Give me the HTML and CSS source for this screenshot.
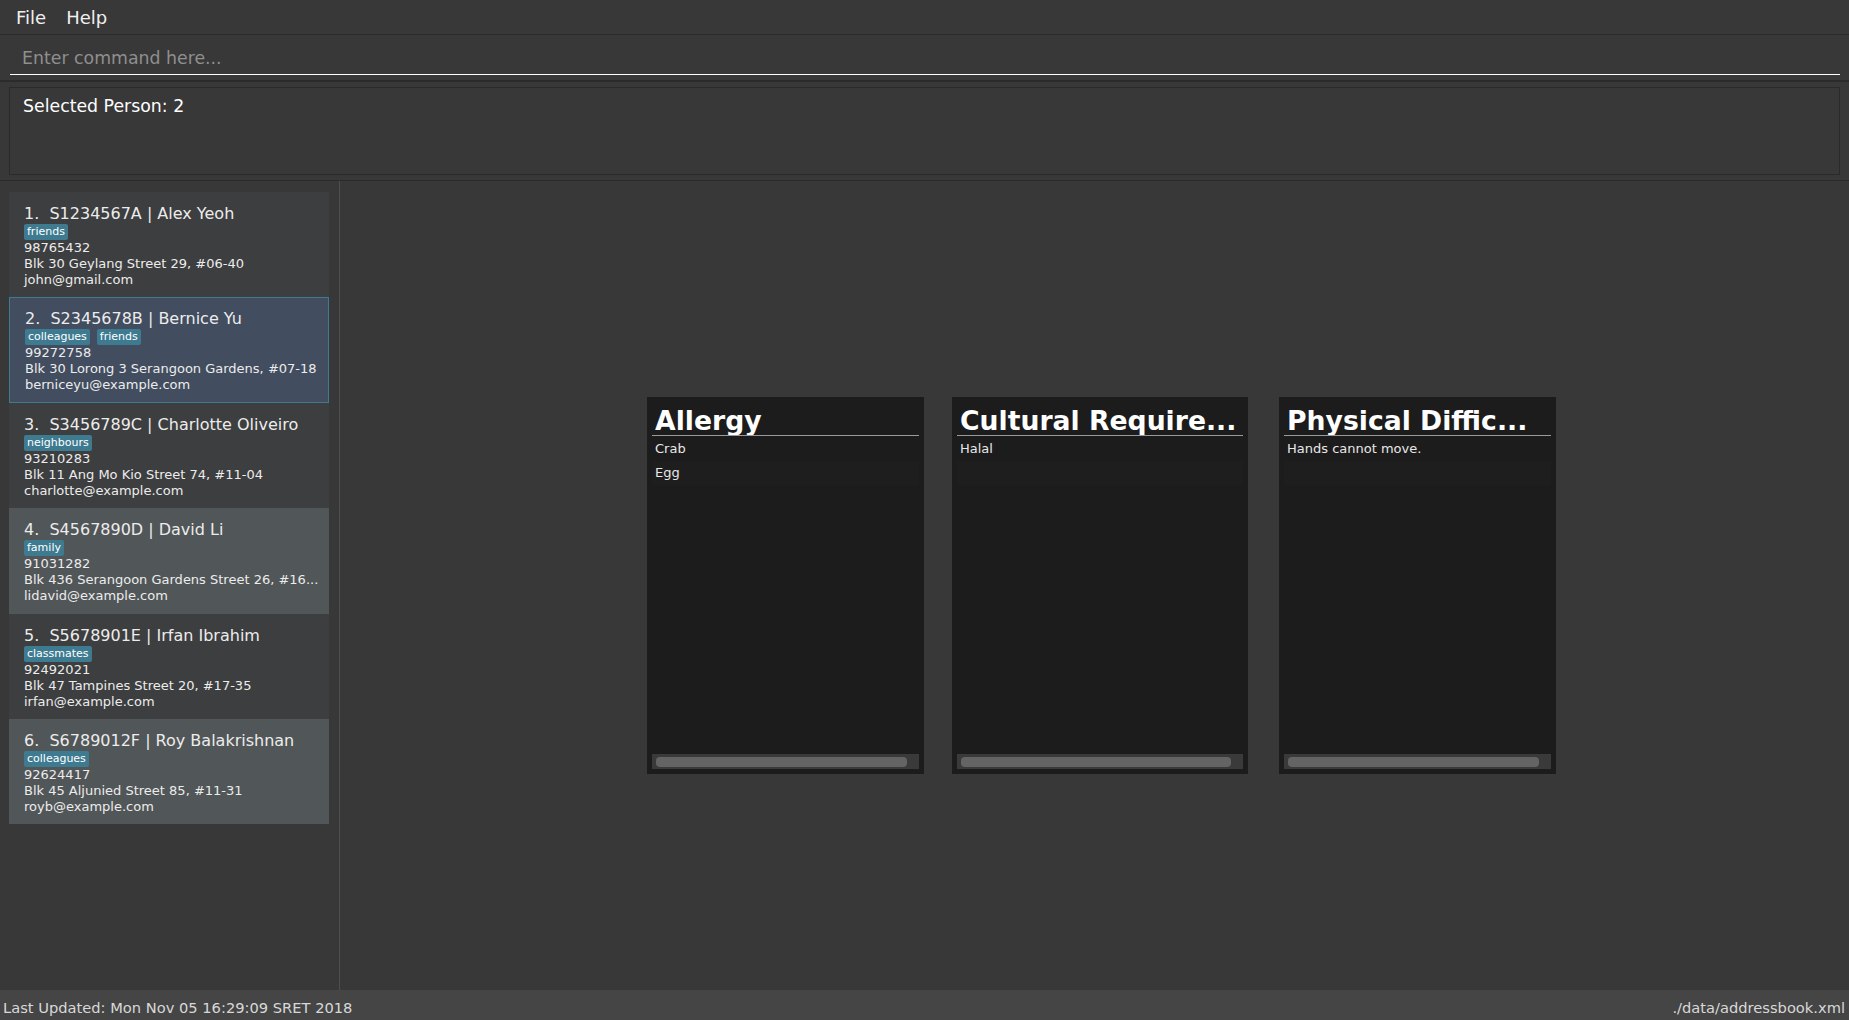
FILE: index.html
```html
<!DOCTYPE html>
<html lang="en">
<head>
<meta charset="utf-8">
<title>Address App</title>
<link rel="stylesheet" href="styles.css">
</head>
<body>
<div class="app">
  <nav class="menubar">
    <span class="menu-item">File</span>
    <span class="menu-item">Help</span>
  </nav>

  <div class="command-pane">
    <input class="command-field" type="text" placeholder="Enter command here...">
  </div>

  <div class="result-pane">
    <div class="result-box">Selected Person: 2</div>
  </div>

  <main class="split">
    <aside class="person-list">
      <div class="person-card even">
        <div class="card-title">1.&nbsp; S1234567A | Alex Yeoh</div>
        <div class="tags"><span class="tag">friends</span></div>
        <div class="small">98765432</div>
        <div class="small">Blk 30 Geylang Street 29, #06-40</div>
        <div class="small">john@gmail.com</div>
      </div>
      <div class="person-card selected">
        <div class="card-title">2.&nbsp; S2345678B | Bernice Yu</div>
        <div class="tags"><span class="tag">colleagues</span><span class="tag">friends</span></div>
        <div class="small">99272758</div>
        <div class="small">Blk 30 Lorong 3 Serangoon Gardens, #07-18</div>
        <div class="small">berniceyu@example.com</div>
      </div>
      <div class="person-card even">
        <div class="card-title">3.&nbsp; S3456789C | Charlotte Oliveiro</div>
        <div class="tags"><span class="tag">neighbours</span></div>
        <div class="small">93210283</div>
        <div class="small">Blk 11 Ang Mo Kio Street 74, #11-04</div>
        <div class="small">charlotte@example.com</div>
      </div>
      <div class="person-card odd">
        <div class="card-title">4.&nbsp; S4567890D | David Li</div>
        <div class="tags"><span class="tag">family</span></div>
        <div class="small">91031282</div>
        <div class="small">Blk 436 Serangoon Gardens Street 26, #16...</div>
        <div class="small">lidavid@example.com</div>
      </div>
      <div class="person-card even">
        <div class="card-title">5.&nbsp; S5678901E | Irfan Ibrahim</div>
        <div class="tags"><span class="tag">classmates</span></div>
        <div class="small">92492021</div>
        <div class="small">Blk 47 Tampines Street 20, #17-35</div>
        <div class="small">irfan@example.com</div>
      </div>
      <div class="person-card odd">
        <div class="card-title">6.&nbsp; S6789012F | Roy Balakrishnan</div>
        <div class="tags"><span class="tag">colleagues</span></div>
        <div class="small">92624417</div>
        <div class="small">Blk 45 Aljunied Street 85, #11-31</div>
        <div class="small">royb@example.com</div>
      </div>
    </aside>

    <section class="detail">
      <div class="info-card narrow">
        <div class="info-head">Allergy</div>
        <div class="info-list">
          <div class="info-row">Crab</div>
          <div class="info-row alt">Egg</div>
        </div>
        <div class="hscroll"><div class="thumb"></div></div>
      </div>
      <div class="info-card wide gap-a">
        <div class="info-head">Cultural Require...</div>
        <div class="info-list">
          <div class="info-row">Halal</div>
          <div class="info-row alt"></div>
        </div>
        <div class="hscroll"><div class="thumb"></div></div>
      </div>
      <div class="info-card narrow gap-b">
        <div class="info-head">Physical Diffic...</div>
        <div class="info-list">
          <div class="info-row">Hands cannot move.</div>
          <div class="info-row alt"></div>
        </div>
        <div class="hscroll"><div class="thumb"></div></div>
      </div>
    </section>
  </main>

  <footer class="status-bar">
    <span>Last Updated: Mon Nov 05 16:29:09 SRET 2018</span>
    <span>./data/addressbook.xml</span>
  </footer>
</div>
</body>
</html>
```

FILE: styles.css
```css
html, body {
  margin: 0;
  padding: 0;
}

body {
  background: #383838;
  font-family: "DejaVu Sans", "Liberation Sans", sans-serif;
  color: #ffffff;
}

.app {
  width: 1849px;
  height: 1020px;
  display: flex;
  flex-direction: column;
  overflow: hidden;
}

/* Menu bar */
.menubar {
  height: 34px;
  flex: none;
  box-sizing: content-box;
  border-bottom: 1px solid #2b2b2b;
  display: flex;
  align-items: flex-start;
  padding-left: 6px;
}

.menu-item {
  font-size: 18px;
  padding: 7px 10px 0;
  color: #f0f0f0;
}

/* Command box */
.command-pane {
  flex: none;
  height: 47px;
  box-sizing: border-box;
  padding: 10px 9px 5px 10px;
  border-bottom: 2px solid #2b2b2b;
}

.command-field {
  display: block;
  width: 100%;
  height: 30px;
  box-sizing: border-box;
  margin: 0;
  padding: 0 12px 3px;
  background: transparent;
  border: none;
  border-bottom: 1px solid #ffffff;
  outline: none;
  font-family: "DejaVu Sans", "Liberation Sans", sans-serif;
  font-size: 17.33px;
  color: #ffffff;
}

.command-field::placeholder {
  color: #8f8f8f;
  opacity: 1;
}

/* Result display */
.result-pane {
  flex: none;
  height: 99px;
  box-sizing: border-box;
  padding: 5px 9px 5px 9px;
  border-bottom: 1px solid #2b2b2b;
}

.result-box {
  height: 88px;
  box-sizing: border-box;
  border: 1px solid #2a2a2a;
  padding: 8px 13px;
  font-size: 17.33px;
  color: #ffffff;
}

/* Main split */
.split {
  flex: 1;
  display: flex;
  min-height: 0;
}

.person-list {
  width: 340px;
  flex: none;
  box-sizing: border-box;
  padding: 11px 10px 0 9px;
  border-right: 1px solid #4e4e4e;
}

.person-card {
  height: 105.4px;
  box-sizing: border-box;
  padding: 12px 10px 0 15px;
  color: #ececec;
  white-space: nowrap;
  overflow: hidden;
}

.person-card.even { background: #3c3e3f; }
.person-card.odd { background: #515658; }
.person-card.selected {
  background: #424d5f;
  border: 1px solid #3e7b91;
  padding: 11px 9px 0 15px;
}

.card-title {
  font-size: 16px;
  line-height: 20px;
}

.tags {
  display: flex;
  gap: 7px;
  height: 16px;
}

.tag {
  background: #3e7b91;
  color: #ffffff;
  font-size: 11px;
  line-height: 14px;
  padding: 1px 3px;
  border-radius: 2px;
}

.small {
  font-size: 13px;
  line-height: 16px;
}

/* Detail cards */
.detail {
  flex: 1;
  display: flex;
  align-items: center;
  justify-content: center;
  padding-left: 14px;
}

.info-card {
  height: 377px;
  box-sizing: border-box;
  background: #1c1c1c;
  padding: 5px;
  display: flex;
  flex-direction: column;
}

.info-card.narrow { width: 277px; }
.info-card.wide { width: 296px; }
.info-card.gap-a { margin-left: 28px; }
.info-card.gap-b { margin-left: 31px; }

.info-head {
  font-size: 26.67px;
  font-weight: bold;
  line-height: 28px;
  padding: 5px 0 0 3px;
  border-bottom: 1px solid #9a9a9a;
  color: #ffffff;
  white-space: nowrap;
  overflow: hidden;
}

.info-list {
  flex: 1;
  padding-top: 1px;
}

.info-row {
  height: 24px;
  line-height: 24px;
  font-size: 13px;
  padding-left: 3px;
  color: #e8e8e8;
  white-space: nowrap;
}

.info-row.alt {
  background: #1e1e1e;
}

.hscroll {
  height: 15px;
  flex: none;
  background: #3a3a3a;
  padding: 3px 12px 2px 4px;
  box-sizing: border-box;
}

.thumb {
  height: 10px;
  background: #646464;
  border-radius: 4px;
}

/* Status bar */
.status-bar {
  height: 30px;
  flex: none;
  box-sizing: border-box;
  background: #454545;
  display: flex;
  justify-content: space-between;
  align-items: center;
  padding: 4px 4px 0 3px;
  font-size: 14.67px;
  color: #d8d8d8;
}
```
